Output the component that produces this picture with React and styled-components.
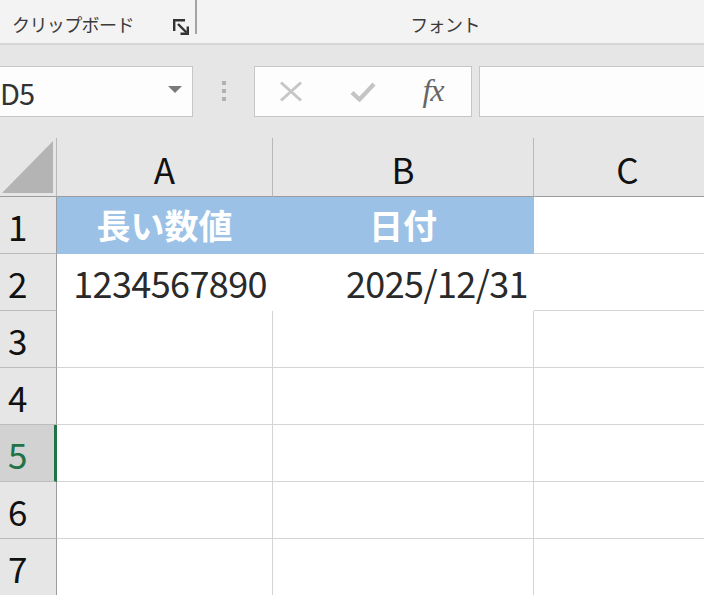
import React from "react";
import styled, { createGlobalStyle } from "styled-components";

const GlobalStyle = createGlobalStyle`
  html, body {
    margin: 0;
    padding: 0;
    background: #e6e6e6;
    overflow: hidden;
  }
  body {
    font-family: "Noto Sans CJK JP", "Noto Sans", sans-serif;
  }
`;

const columns = [
  { key: "A", width: 216 },
  { key: "B", width: 261 },
  { key: "C", width: 188 },
];

const rows = [
  { no: 1, cells: ["長い数値", "日付", ""], kind: "title" },
  { no: 2, cells: ["1234567890", "2025/12/31", ""], kind: "value" },
  { no: 3, cells: ["", "", ""] },
  { no: 4, cells: ["", "", ""] },
  { no: 5, cells: ["", "", ""], selected: true },
  { no: 6, cells: ["", "", ""] },
  { no: 7, cells: ["", "", ""] },
];

const App = () => {
  return (
    <Page>
      <GlobalStyle />
      <Ribbon>
        <RibbonGroup $width={196}>
          <GroupLabel>クリップボード</GroupLabel>
          <Launcher viewBox="0 0 16 16">
            <path d="M1.2 12 V1.2 H12" />
            <path d="M5 5 L13.5 13.5" />
            <path d="M14.8 7.5 V14.8 H7.5" />
          </Launcher>
        </RibbonGroup>
        <GroupDivider />
        <RibbonGroup $width={496} $center>
          <GroupLabel>フォント</GroupLabel>
        </RibbonGroup>
      </Ribbon>

      <FormulaArea>
        <NameBox>
          <NameText>D5</NameText>
          <DropArrow />
        </NameBox>
        <Grip>
          <span />
          <span />
          <span />
        </Grip>
        <FuncBox>
          <FuncSlot>
            <svg width="24" height="21" viewBox="0 0 24 21">
              <path
                d="M2 1.5 L22 19.5 M22 1.5 L2 19.5"
                stroke="#c6c6c6"
                strokeWidth="3"
                fill="none"
              />
            </svg>
          </FuncSlot>
          <FuncSlot>
            <svg width="26" height="20" viewBox="0 0 26 20">
              <path
                d="M2 10.5 L9.5 17.5 L24 2"
                stroke="#c4c4c4"
                strokeWidth="4.2"
                fill="none"
              />
            </svg>
          </FuncSlot>
          <FuncSlot>
            <FxText>fx</FxText>
          </FuncSlot>
        </FuncBox>
        <FormulaInput />
      </FormulaArea>

      <Sheet>
        <Corner>
          <CornerMark />
        </Corner>
        {columns.map((col) => (
          <ColHead key={col.key}>{col.key}</ColHead>
        ))}
        {rows.map((row) => (
          <React.Fragment key={row.no}>
            <RowHead $selected={row.selected}>{row.no}</RowHead>
            {row.cells.map((text, i) => {
              const filled = row.kind === "title" && i < 2;
              const plain = row.kind === "value" && i < 2;
              return (
                <Cell
                  key={i}
                  $filled={filled}
                  $plain={plain}
                  $right={row.kind === "value"}
                >
                  {text}
                </Cell>
              );
            })}
          </React.Fragment>
        ))}
      </Sheet>
    </Page>
  );
};

export default App;

const Page = styled.div`
  width: 704px;
  height: 595px;
  overflow: hidden;
  background: #e6e6e6;
`;

const Ribbon = styled.div`
  display: flex;
  height: 43px;
  background: #f3f3f3;
  border-bottom: 2px solid #d6d6d6;
`;

const RibbonGroup = styled.div`
  position: relative;
  flex: 0 0 ${(p) => p.$width}px;
  display: flex;
  align-items: center;
  justify-content: ${(p) => (p.$center ? "center" : "flex-start")};
  padding-left: ${(p) => (p.$center ? "0" : "12px")};
  box-sizing: border-box;
  height: 43px;
`;

const GroupLabel = styled.span`
  font-size: 18px;
  color: #3a3a3a;
  line-height: 1;
  margin-top: 5px;
  letter-spacing: -0.6px;
`;

const Launcher = styled.svg`
  position: absolute;
  left: 173px;
  top: 19px;
  width: 16px;
  height: 16px;
  fill: none;
  stroke: #333;
  stroke-width: 2.4;
`;

const GroupDivider = styled.div`
  width: 2px;
  height: 34px;
  background: #a4a4a4;
  margin-left: -1px;
`;

const FormulaArea = styled.div`
  display: flex;
  align-items: stretch;
  height: 51px;
  padding: 21px 0 21px;
`;

const InputBox = styled.div`
  background: #fdfdfd;
  border: 1px solid #c6c6c6;
  box-sizing: border-box;
  height: 51px;
`;

const NameBox = styled(InputBox)`
  flex: 0 0 193px;
  border-left: none;
  display: flex;
  align-items: center;
  justify-content: space-between;
  padding-right: 10px;
`;

const NameText = styled.span`
  font-size: 29px;
  color: #333;
  margin-left: 0;
  letter-spacing: -1px;
`;

const DropArrow = styled.span`
  width: 0;
  height: 0;
  border-left: 7px solid transparent;
  border-right: 7px solid transparent;
  border-top: 7px solid #7a7a7a;
  margin-bottom: 4px;
`;

const Grip = styled.div`
  flex: 0 0 61px;
  display: flex;
  flex-direction: column;
  align-items: center;
  justify-content: center;
  gap: 4px;
  padding-bottom: 2px;

  span {
    width: 4px;
    height: 4px;
    background: #b0b0b0;
  }
`;

const FuncBox = styled(InputBox)`
  flex: 0 0 216px;
  display: flex;
`;

const FuncSlot = styled.div`
  flex: 0 0 72px;
  display: flex;
  align-items: center;
  justify-content: center;
`;

const FxText = styled.span`
  font-family: "Liberation Serif", "DejaVu Serif", serif;
  font-style: italic;
  font-size: 32px;
  color: #666;
  margin-left: -4px;
  margin-bottom: 2px;
  letter-spacing: -1px;
`;

const FormulaInput = styled(InputBox)`
  flex: 0 0 300px;
  margin-left: 7px;
`;

const Sheet = styled.div`
  display: grid;
  grid-template-columns: 57px ${columns.map((c) => `${c.width}px`).join(" ")};
  grid-template-rows: 59px;
  grid-auto-rows: 57px;
  background: #fff;
`;

const HeadBase = styled.div`
  box-sizing: border-box;
  background: #e6e6e6;
  display: flex;
  align-items: center;
  font-size: 35px;
  color: #111;
  line-height: 1;
`;

const Corner = styled(HeadBase)`
  border-right: 1px solid #b8b8b8;
  border-bottom: 1px solid #9c9c9c;
  justify-content: flex-end;
  align-items: flex-end;
  padding: 0 3px 3px 0;
`;

const CornerMark = styled.div`
  width: 51px;
  height: 52px;
  background: #b4b4b4;
  clip-path: polygon(100% 0, 100% 100%, 0 100%);
`;

const ColHead = styled(HeadBase)`
  justify-content: center;
  border-right: 1px solid #b9b9b9;
  border-bottom: 1px solid #9c9c9c;
  padding-top: 2px;
`;

const RowHead = styled(HeadBase)`
  padding-left: 8px;
  border-bottom: 1px solid #bcbcbc;
  border-right: ${(p) => (p.$selected ? "3px solid #217346" : "1px solid #9c9c9c")};
  background: ${(p) => (p.$selected ? "#d2d2d2" : "#e6e6e6")};
  color: ${(p) => (p.$selected ? "#217346" : "#111")};
`;

const Cell = styled.div`
  box-sizing: border-box;
  display: flex;
  align-items: center;
  justify-content: ${(p) => (p.$right ? "flex-end" : "center")};
  padding-right: ${(p) => (p.$right ? "5px" : "0")};
  border-right: 1px solid #d4d4d4;
  border-bottom: 1px solid #d4d4d4;
  border-color: ${(p) =>
    p.$filled ? "transparent" : p.$plain ? "#ffffff" : "#d4d4d4"};
  background: ${(p) => (p.$filled ? "#9bc2e6" : "#ffffff")};
  color: ${(p) => (p.$filled ? "#ffffff" : "#2a2a2a")};
  font-weight: ${(p) => (p.$filled ? 700 : 400)};
  font-size: ${(p) => (p.$filled ? "34px" : "36px")};
  letter-spacing: ${(p) => (p.$right ? "-0.6px" : "0")};
  line-height: 1;
  white-space: nowrap;
`;
